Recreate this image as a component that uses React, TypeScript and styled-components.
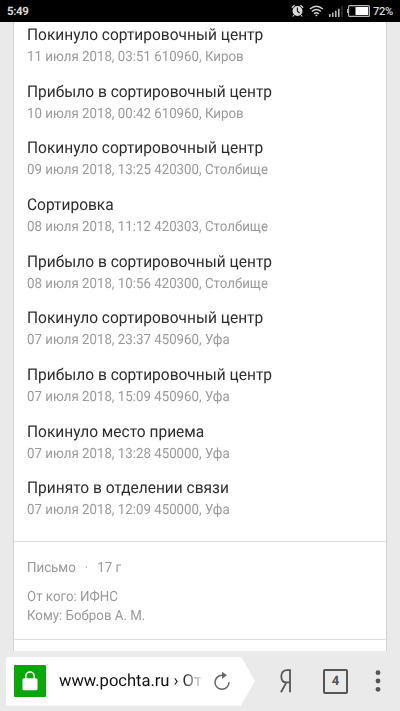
import React from "react";
import styled, { createGlobalStyle } from "styled-components";

const GlobalStyle = createGlobalStyle`
  * { box-sizing: border-box; }
  body { margin: 0; background: #eaeaea; font-family: Roboto, "Noto Sans", sans-serif; overflow: hidden; text-rendering: geometricPrecision; }
`;

const Screen = styled.main`
  display: flex;
  flex-direction: column;
  width: 400px;
  height: 711px;
  background: #eaeaea;
`;

const StatusBar = styled.header`
  flex: none;
  display: flex;
  align-items: center;
  height: 22px;
  padding: 0 6px 0 7px;
  background: #000;
  color: #d8d8d8;
  font-size: 11px;
  font-weight: 500;
`;

const Clock = styled.span`
  flex: 1;
  font-size: 11.5px;
  font-weight: 700;
  letter-spacing: -0.4px;
`;

const Charge = styled.span`
  margin-left: 2px;
  width: 21px;
  font-size: 11.2px;
  letter-spacing: -0.4px;
  white-space: nowrap;
`;

const Page = styled.section`
  flex: none;
  height: 629px;
  padding: 0 13px;
  overflow: hidden;
`;

const Card = styled.article`
  height: 629px;
  background: #fff;
  border-left: 1px solid #d2d2d2;
  border-right: 1px solid #d2d2d2;
`;

const EventList = styled.ol`
  margin: 0;
  padding: 1.9px 13px 0;
  height: 519px;
  list-style: none;
`;

const Event = styled.li`
  height: 56.69px;
`;

const EventTitle = styled.div`
  height: 23px;
  color: #2c2c2c;
  font-size: 15.5px;
  line-height: 23px;
  white-space: nowrap;
  transform: scaleY(1.05);
`;

const EventMeta = styled.div`
  color: #999;
  font-size: 13.3px;
  line-height: 22px;
  white-space: nowrap;
  transform: scaleY(1.06);
`;

const Details = styled.section`
  height: 99px;
  padding: 17px 13px 0;
  border-top: 1px solid #dedede;
  border-bottom: 1px solid #dedede;
  color: #999;
  font-size: 13.3px;
  line-height: 19px;
`;

const DetailLine = styled.div`
  transform: scaleY(1.06);
`;

const Summary = styled(DetailLine)`
  display: flex;
  gap: 9px;
  margin-bottom: 10px;
`;

const BrowserBar = styled.footer`
  flex: 1;
  display: flex;
  align-items: center;
  padding-left: 6px;
  background: #eaeaea;
`;

const AddressBox = styled.div`
  display: flex;
  align-items: center;
  width: 249px;
  height: 49px;
  padding-left: 8px;
  background: #fff;
  border-radius: 2px;
  clip-path: polygon(0 0, 235px 0, 249px 50%, 235px 100%, 0 100%);
`;

const SecureBadge = styled.div`
  display: flex;
  align-items: center;
  justify-content: center;
  width: 32px;
  height: 32px;
  border-radius: 1px;
  background: #0aa70a;
`;

const Address = styled.div`
  width: 145px;
  margin-left: 13px;
  padding-top: 1px;
  color: #111;
  font-size: 16.6px;
  letter-spacing: -0.04px;
  line-height: 24px;
  white-space: nowrap;
  mask-image: linear-gradient(to right, #000 123px, transparent 145px);
`;

const Reload = styled.svg`
  margin-left: 9px;
`;

const Actions = styled.nav`
  flex: 1;
  display: flex;
  align-items: center;
`;

const Yandex = styled.svg`
  margin-left: 24px;
`;

const TabCount = styled.div`
  display: flex;
  align-items: center;
  justify-content: center;
  width: 25px;
  height: 25px;
  margin-left: 31px;
  border: 2px solid #555;
  border-radius: 2px;
  color: #555;
  font-size: 13px;
  font-weight: 700;
`;

const Menu = styled.svg`
  margin-left: 27px;
`;

const events = [
  ["Покинуло сортировочный центр", "11 июля 2018, 03:51 610960, Киров"],
  ["Прибыло в сортировочный центр", "10 июля 2018, 00:42 610960, Киров"],
  ["Покинуло сортировочный центр", "09 июля 2018, 13:25 420300, Столбище"],
  ["Сортировка", "08 июля 2018, 11:12 420303, Столбище"],
  ["Прибыло в сортировочный центр", "08 июля 2018, 10:56 420300, Столбище"],
  ["Покинуло сортировочный центр", "07 июля 2018, 23:37 450960, Уфа"],
  ["Прибыло в сортировочный центр", "07 июля 2018, 15:09 450960, Уфа"],
  ["Покинуло место приема", "07 июля 2018, 13:28 450000, Уфа"],
  ["Принято в отделении связи", "07 июля 2018, 12:09 450000, Уфа"],
];

const StatusIcons = () => (
  <svg width="80" height="16" viewBox="0 0 80 16" fill="none">
    {/* Alarm */}
    <circle cx="6.5" cy="8" r="5" fill="#d8d8d8" />
    <path d="M.8 4.7 3.6 2.2M12.2 4.7 9.4 2.2M3 12l-1.2 1.5M10 12l1.2 1.5" stroke="#d8d8d8" strokeWidth="1.2" />
    <path d="M6.4 4.6v3.7l2.3 1.7" stroke="#111" strokeWidth="1.1" />
    {/* Wi-Fi */}
    <path d="M18.9 6.1Q25.4.3 31.9 6.1M20.9 8.5q4.5-4 9 0M22.9 10.8q2.5-2.2 5 0" stroke="#d0d0d0" strokeWidth="1.4" />
    <path d="m24 12 1.4 1.6 1.4-1.6q-1.4-1-2.8 0Z" fill="#d0d0d0" />
    {/* Signal */}
    <path d="M38.8 11v3M41.8 9.5v4.5M44.8 7.8v6.2M47.8 5.8v8.2" stroke="#cfcfcf" strokeWidth="1.4" />
    <path d="M51 3v11" stroke="#444" strokeWidth="1.2" />
    {/* Battery */}
    <rect x="57.6" y="2.6" width="20.8" height="10.8" rx="1" stroke="#bbb" strokeWidth="1.1" />
    <path d="M56 6h1.2v4H56z" fill="#bbb" />
    <path d="M64.5 4H77.2v8H64.5z" fill="#fff" />
  </svg>
);

export default function App() {
  return (
    <Screen>
      <GlobalStyle />
      <StatusBar>
        <Clock>5:49</Clock>
        <StatusIcons />
        <Charge>72%</Charge>
      </StatusBar>
      <Page>
        <Card>
          <EventList>
            {events.map(([title, meta]) => (
              <Event key={meta}>
                <EventTitle>{title}</EventTitle>
                <EventMeta>{meta}</EventMeta>
              </Event>
            ))}
          </EventList>
          <Details>
            <Summary>
              <span>Письмо</span>
              <span>·</span>
              <span>17 г</span>
            </Summary>
            <DetailLine>От кого: ИФНС</DetailLine>
            <DetailLine>Кому: Бобров А. М.</DetailLine>
          </Details>
        </Card>
      </Page>
      <BrowserBar>
        <AddressBox>
          <SecureBadge>
            <svg width="16" height="20" viewBox="0 0 16 20" fill="none">
              <rect x=".5" y="7.3" width="15" height="12" rx="1.5" fill="#fff" />
              <path d="M3.8 8V5.2a4.2 4.2 0 0 1 8.4 0V8" stroke="#fff" strokeWidth="1.6" />
            </svg>
          </SecureBadge>
          <Address>www.pochta.ru › От</Address>
          <Reload width="18" height="22" viewBox="0 0 18 22" fill="none">
            <path d="M9.5 5.3H9A7 7 0 1 0 16 12.3" stroke="#666" strokeWidth="1.5" />
            <path d="M9 1.8v7l5-3.5Z" fill="#666" />
          </Reload>
        </AddressBox>
        <Actions>
          <Yandex width="13" height="24" viewBox="0 0 13 24" fill="none">
            <path d="M11 23.2V1.2H8.2C4.3 1.2 2.3 3.6 2.3 7.2c0 4 2 6.2 5.2 6.2H11M7.4 13.4 2 23.2" stroke="#555" strokeWidth="1.8" />
          </Yandex>
          <TabCount>4</TabCount>
          <Menu width="6" height="24" viewBox="0 0 6 24" fill="#555">
            <circle cx="3" cy="3.7" r="2.4" />
            <circle cx="3" cy="12" r="2.4" />
            <circle cx="3" cy="20.3" r="2.4" />
          </Menu>
        </Actions>
      </BrowserBar>
    </Screen>
  );
}
